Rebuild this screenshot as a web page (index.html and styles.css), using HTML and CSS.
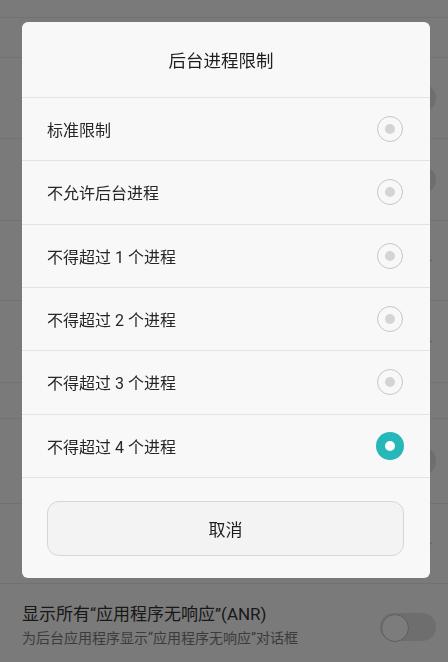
FILE: index.html
```html
<!DOCTYPE html>
<html lang="zh-CN">
<head>
    <meta charset="UTF-8">
    <title>后台进程限制</title>
    <link rel="stylesheet" href="styles.css">
</head>
<body>
    <!--设置列表（背景，被对话框遮住的行不写文字）-->
    <div class="settings">
        <div class="set-row set-cut"></div>
        <div class="set-head"></div>
        <div class="set-row set-h81"><span></span><i class="switch"></i></div>
        <div class="set-row set-h82"><span></span><i class="switch"></i></div>
        <div class="set-row set-h80"><span></span><i class="arrow"></i></div>
        <div class="set-row set-h82"><span></span><i class="arrow"></i></div>
        <div class="set-head set-h36"></div>
        <div class="set-row set-h85"><span></span><i class="switch"></i></div>
        <div class="set-row set-h80"><span></span><i class="arrow"></i></div>
        <div class="set-row set-anr">
            <div class="set-text">
                <div class="set-title">显示所有“应用程序无响应”(ANR)</div>
                <div class="set-desc">为后台应用程序显示“应用程序无响应”对话框</div>
            </div>
            <i class="switch"></i>
        </div>
    </div>

    <!--遮罩层-->
    <div class="mask"></div>

    <!--对话框-->
    <div class="dialog">
        <div class="dialog-title">后台进程限制</div>
        <ul class="options">
            <li class="option"><span>标准限制</span><i class="radio"></i></li>
            <li class="option"><span>不允许后台进程</span><i class="radio"></i></li>
            <li class="option"><span>不得超过 1 个进程</span><i class="radio"></i></li>
            <li class="option"><span>不得超过 2 个进程</span><i class="radio"></i></li>
            <li class="option"><span>不得超过 3 个进程</span><i class="radio"></i></li>
            <li class="option"><span>不得超过 4 个进程</span><i class="radio checked"></i></li>
        </ul>
        <div class="dialog-foot">
            <div class="btn-cancel">取消</div>
        </div>
    </div>
</body>
</html>
```

FILE: styles.css
```css
* {
    padding: 0;
    margin: 0;
    box-sizing: border-box;
}

body {
    width: 448px;
    height: 662px;
    overflow: hidden;
    background: #f5f5f5;
    font-family: Roboto, "Noto Sans CJK SC", sans-serif;
    color: #333;
}

/* 背景设置列表 */
.settings {
    display: flex;
    flex-direction: column;
}

.set-row,
.set-head {
    display: flex;
    align-items: center;
    justify-content: space-between;
    padding: 0 12px 0 22px;
    border-bottom: 1px solid #e2e2e2;
}

.set-cut {
    height: 18px;
}

.set-head {
    height: 40px;
}

.set-h36 {
    height: 36px;
}

.set-h80 {
    height: 80px;
}

.set-h81 {
    height: 81px;
}

.set-h82 {
    height: 82px;
}

.set-h85 {
    height: 85px;
}

/* 右侧小箭头 */
.arrow {
    display: block;
    width: 7px;
    height: 7px;
    margin-right: 6px;
    border-top: 1.5px solid #b8b8b8;
    border-right: 1.5px solid #b8b8b8;
    transform: rotate(45deg);
}

.set-anr {
    height: 90px;
    align-items: flex-start;
    padding-top: 18px;
    border-bottom: 0;
}

.set-title {
    font-size: 17px;
    line-height: 24px;
    color: #303030;
}

.set-desc {
    font-size: 14px;
    line-height: 20px;
    margin-top: 2px;
    color: #777;
}

.switch {
    display: block;
    position: relative;
    width: 56px;
    height: 28px;
    border-radius: 14px;
    background: #dcdcdc;
}

.set-anr > .switch {
    margin-top: 11px;
}

.switch::after {
    content: "";
    position: absolute;
    left: 1px;
    top: 1px;
    width: 26px;
    height: 26px;
    border-radius: 50%;
    background: #f8f8f8;
    border: 1px solid #bcbcbc;
}

/* 遮罩层 */
.mask {
    position: fixed;
    top: 0;
    left: 0;
    width: 100%;
    height: 100%;
    background: rgba(0, 0, 0, 0.5);
}

/* 对话框 */
.dialog {
    position: fixed;
    top: 22px;
    left: 22px;
    width: 408px;
    height: 556px;
    border-radius: 6px;
    background: #f8f8f8;
    overflow: hidden;
}

.dialog-title {
    height: 76px;
    display: flex;
    align-items: center;
    justify-content: center;
    padding-right: 10px;
    font-size: 17.5px;
    color: #1e1e1e;
    border-bottom: 1px solid #e3e3e3;
}

.options {
    list-style: none;
}

.option {
    height: 63.33px;
    display: flex;
    align-items: center;
    justify-content: space-between;
    padding: 0 27px 0 25px;
    border-bottom: 1px solid #e3e3e3;
    font-size: 16px;
    color: #262626;
}

.radio {
    display: block;
    position: relative;
    width: 26px;
    height: 26px;
    border-radius: 50%;
    border: 1.3px solid #c6c6c6;
}

.radio::after {
    content: "";
    position: absolute;
    left: 50%;
    top: 50%;
    width: 10px;
    height: 10px;
    margin: -5px 0 0 -5px;
    border-radius: 50%;
    background: #d4d4d4;
}

.radio.checked {
    width: 28px;
    height: 28px;
    margin-right: -1px;
    border: 0;
    background: #26b7b9;
}

.radio.checked::after {
    background: #fff;
}

.dialog-foot {
    padding: 23px 26px 0 25px;
}

.btn-cancel {
    height: 55px;
    display: flex;
    align-items: center;
    justify-content: center;
    border: 1px solid #d6d6d6;
    border-radius: 12px;
    background: #f3f3f3;
    font-size: 17px;
    color: #1e1e1e;
}
```
